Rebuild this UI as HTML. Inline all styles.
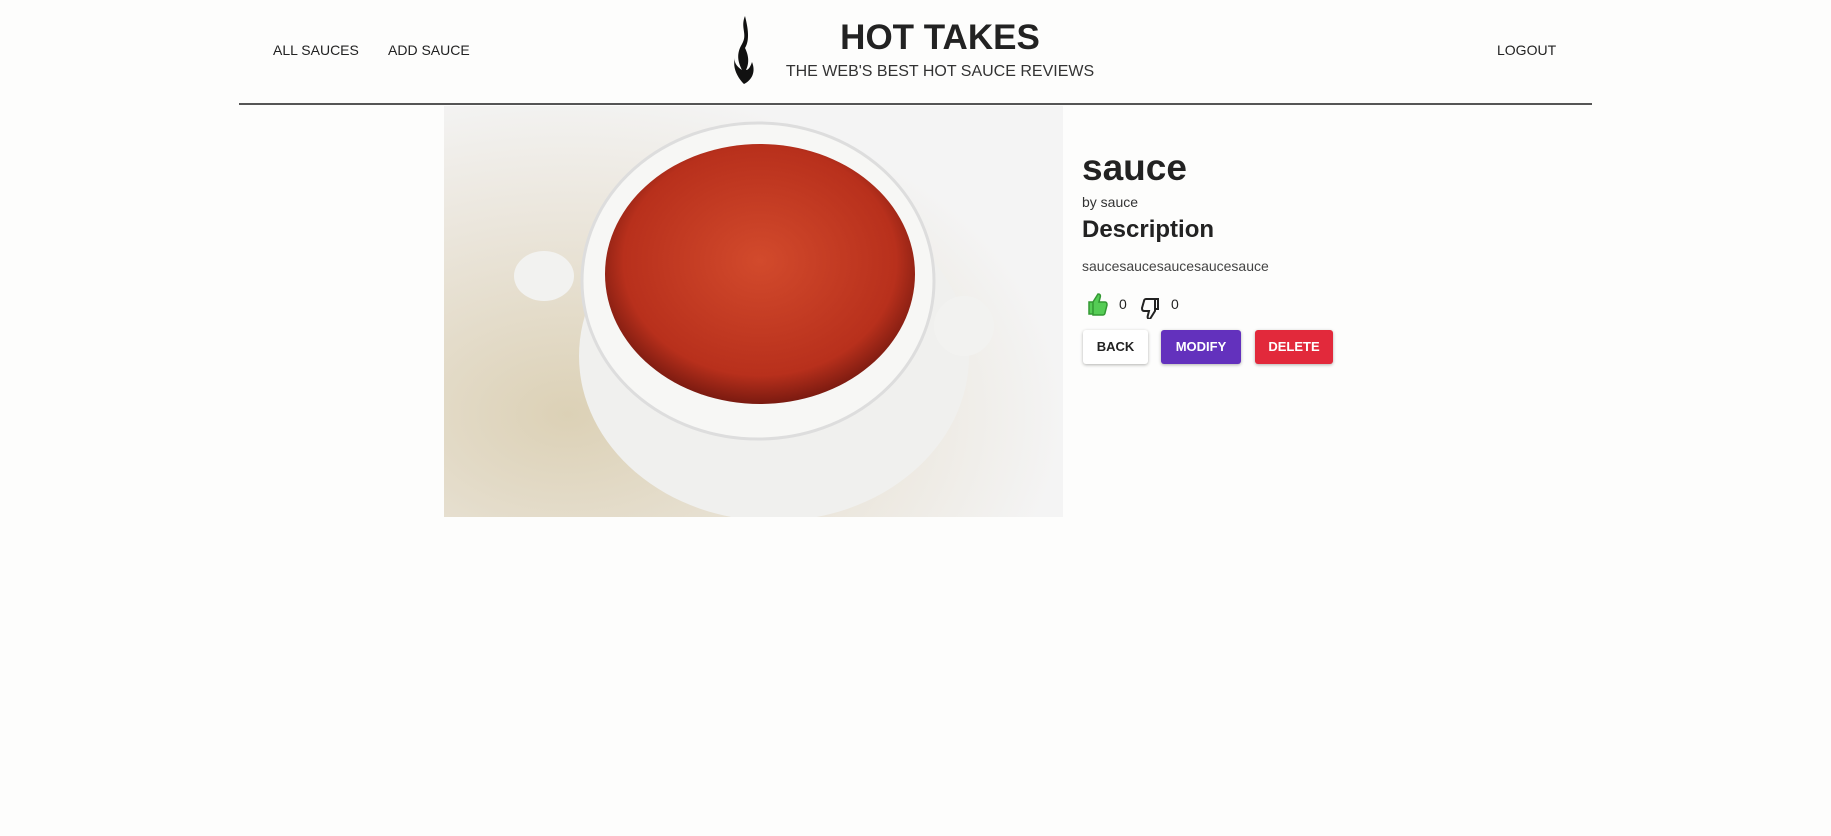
<!DOCTYPE html>
<html><head><meta charset="utf-8"><style>
body{margin:0;width:1831px;height:836px;background:#fdfdfc;font-family:"Liberation Sans","DejaVu Sans",sans-serif;color:#222;position:relative;overflow:hidden}
.a{position:absolute;white-space:nowrap}
.nav{font-size:14px;color:#222}
.btn{position:absolute;top:330px;height:34px;line-height:34px;text-align:center;font-size:13px;font-weight:bold;border-radius:3px;box-shadow:0 1px 3px rgba(0,0,0,.3)}
</style></head><body>
<div class="a nav" style="left:273px;top:42px">ALL SAUCES</div>
<div class="a nav" style="left:388px;top:42px">ADD SAUCE</div>
<div class="a nav" style="left:1497px;top:42px">LOGOUT</div>
<svg class="a" style="left:730px;top:14px" width="30" height="72" viewBox="0 0 30 72"><path d="M15 2 C10 14 18 20 12 30 C6 40 8 48 12 56 C6 52 4 48 5 44 C2 54 8 64 14 70 C22 66 26 58 22 48 C20 54 18 56 16 56 C20 48 18 40 15 34 C20 26 18 14 15 2Z" fill="#111"/></svg>
<div class="a" style="left:780px;top:18px;width:320px;text-align:center;font-size:35px;font-weight:bold;color:#222">HOT TAKES</div>
<div class="a" style="left:775px;top:63px;width:330px;text-align:center;font-size:16px;color:#333">THE WEB'S BEST HOT SAUCE REVIEWS</div>
<div class="a" style="left:239px;top:103px;width:1353px;height:2px;background:#555"></div>
<svg class="a" style="left:444px;top:106px" width="619" height="411">
<defs><radialGradient id="bg" cx="20%" cy="75%" r="80%"><stop offset="0" stop-color="#dcd1b6"/><stop offset="0.6" stop-color="#ebe6dc"/><stop offset="1" stop-color="#f4f4f4"/></radialGradient>
<radialGradient id="s" cx="50%" cy="45%" r="55%"><stop offset="0" stop-color="#d24a2c"/><stop offset="0.8" stop-color="#b8301c"/><stop offset="1" stop-color="#7a1a10"/></radialGradient></defs>
<rect width="619" height="411" fill="url(#bg)"/>
<ellipse cx="330" cy="250" rx="195" ry="165" fill="#f0f0ee"/>
<ellipse cx="100" cy="170" rx="30" ry="25" fill="#f2f2f0"/>
<ellipse cx="520" cy="220" rx="30" ry="30" fill="#f2f2f0"/>
<ellipse cx="314" cy="175" rx="176" ry="158" fill="#f7f7f5" stroke="#ddd" stroke-width="3"/>
<ellipse cx="316" cy="168" rx="155" ry="130" fill="url(#s)"/>
</svg>
<div class="a" style="left:1082px;top:147px;font-size:37px;font-weight:600;color:#222">sauce</div>
<div class="a" style="left:1082px;top:194px;font-size:14px;color:#333">by sauce</div>
<div class="a" style="left:1082px;top:216px;font-size:24px;font-weight:600;color:#222">Description</div>
<div class="a" style="left:1082px;top:258px;font-size:14px;color:#444">saucesaucesaucesaucesauce</div>
<svg class="a" style="left:1086px;top:292px" width="22" height="24" viewBox="0 0 22 24"><path d="M3 10h4v12H3z M7 10l5-8c2 0 3 1 2 4l-1 4h6c2 0 2 2 2 3l-2 8c0 1-1 2-2 2H7z" fill="#5c5" stroke="#393" stroke-width="1.5"/></svg>
<div class="a" style="left:1119px;top:296px;font-size:14px">0</div>
<svg class="a" style="left:1140px;top:295px" width="22" height="24" viewBox="0 0 22 24"><path d="M18 4h-3v10h3z M15 4H6C5 4 4 5 4 6l-2 7c0 1 0 3 2 3h5l-1 4c-1 3 0 4 2 4l5-8z" fill="none" stroke="#222" stroke-width="2"/></svg>
<div class="a" style="left:1171px;top:296px;font-size:14px">0</div>
<div class="btn" style="left:1083px;width:65px;background:#fff;color:#222">BACK</div>
<div class="btn" style="left:1161px;width:80px;background:#6331bd;color:#fff">MODIFY</div>
<div class="btn" style="left:1255px;width:78px;background:#e2293b;color:#fff">DELETE</div>
</body></html>
